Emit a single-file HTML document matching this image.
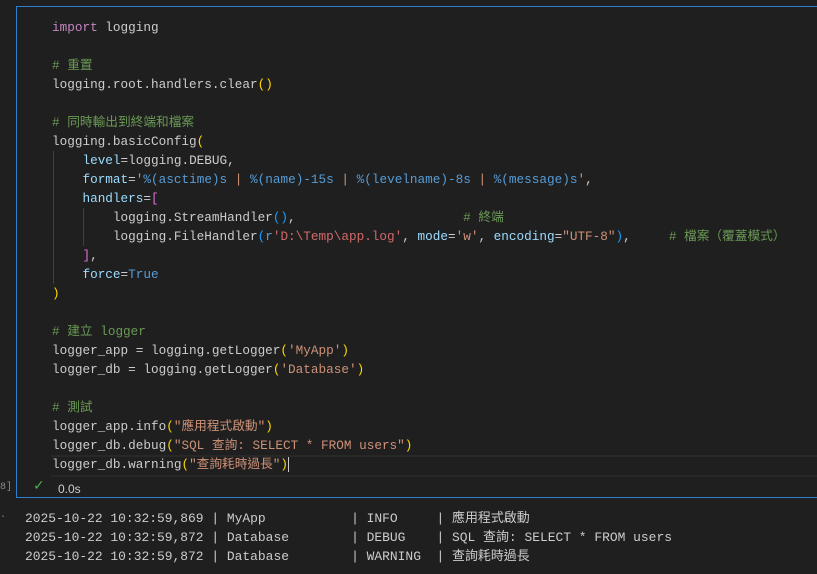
<!DOCTYPE html>
<html><head><meta charset="utf-8"><style>
body{margin:0;width:817px;height:574px;background:#1f1f1f;overflow:hidden;position:relative;font-family:"Liberation Mono","Noto Sans CJK TC",monospace;}
.cell{position:absolute;left:16px;top:6px;width:820px;height:492px;border:1px solid #2b80d0;box-sizing:border-box;background:#1f1f1f;}
.code{position:absolute;left:52px;top:18px;font-size:12.7px;line-height:19px;color:#cccccc;}
.l{height:19px;white-space:pre}
.k{color:#c586c0}.c{color:#6a9955}.s{color:#ce9178}.v{color:#9cdcfe}.b{color:#569cd6}.y{color:#ffd700}.p{color:#da70d6}.bl{color:#179fff}.r{color:#d16969}
.g{position:absolute;width:1px;background:#404040}
.cur{position:absolute;left:51px;top:455px;width:780px;height:18px;border-top:2px solid #282828;border-bottom:2px solid #282828}
.out{position:absolute;left:25px;top:509px;font-size:12.95px;line-height:19px;color:#cccccc;white-space:pre}
</style></head><body>
<div class="cell"></div>
<div class="cur"></div>
<div class="g" style="left:53px;top:151px;height:133px"></div>
<div class="g" style="left:83px;top:208px;height:38px"></div>
<div class="code"><div class="l"><span class="k">import</span> logging</div><div class="l"> </div><div class="l"><span class="c"># 重置</span></div><div class="l">logging.root.handlers.clear<span class="y">()</span></div><div class="l"> </div><div class="l"><span class="c"># 同時輸出到終端和檔案</span></div><div class="l">logging.basicConfig<span class="y">(</span></div><div class="l">    <span class="v">level</span>=logging.DEBUG,</div><div class="l">    <span class="v">format</span>=<span class="s">'</span><span class="b">%(asctime)s</span><span class="s"> | </span><span class="b">%(name)-15s</span><span class="s"> | </span><span class="b">%(levelname)-8s</span><span class="s"> | </span><span class="b">%(message)s</span><span class="s">'</span>,</div><div class="l">    <span class="v">handlers</span>=<span class="p">[</span></div><div class="l">        logging.StreamHandler<span class="bl">()</span>,                      <span class="c"># 終端</span></div><div class="l">        logging.FileHandler<span class="bl">(</span><span class="b">r</span><span class="r">'D:\Temp\app.log'</span>, <span class="v">mode</span>=<span class="s">'w'</span>, <span class="v">encoding</span>=<span class="s">"UTF-8"</span><span class="bl">)</span>,     <span class="c"># 檔案（覆蓋模式）</span></div><div class="l">    <span class="p">]</span>,</div><div class="l">    <span class="v">force</span>=<span class="b">True</span></div><div class="l"><span class="y">)</span></div><div class="l"> </div><div class="l"><span class="c"># 建立 logger</span></div><div class="l">logger_app = logging.getLogger<span class="y">(</span><span class="s">'MyApp'</span><span class="y">)</span></div><div class="l">logger_db = logging.getLogger<span class="y">(</span><span class="s">'Database'</span><span class="y">)</span></div><div class="l"> </div><div class="l"><span class="c"># 測試</span></div><div class="l">logger_app.info<span class="y">(</span><span class="s">"應用程式啟動"</span><span class="y">)</span></div><div class="l">logger_db.debug<span class="y">(</span><span class="s">"SQL 查詢: SELECT * FROM users"</span><span class="y">)</span></div><div class="l">logger_db.warning<span class="y">(</span><span class="s">"查詢耗時過長"</span><span class="y">)</span><span style="border-left:1px solid #ccc"></span></div></div>
<div style="position:absolute;left:0;top:482px;font-size:10px;color:#888;font-family:'Liberation Mono',monospace">8]</div>
<div style="position:absolute;left:33px;top:478px;font-size:14px;color:#4caf50;font-family:'DejaVu Sans',sans-serif">✓</div>
<div style="position:absolute;left:58px;top:482px;font-size:12px;color:#cccccc;font-family:'Liberation Sans',sans-serif">0.0s</div>
<div style="position:absolute;left:0;top:512px;font-size:10px;color:#888">·</div>
<div class="out">2025-10-22 10:32:59,869 | MyApp           | INFO     | 應用程式啟動
2025-10-22 10:32:59,872 | Database        | DEBUG    | SQL 查詢: SELECT * FROM users
2025-10-22 10:32:59,872 | Database        | WARNING  | 查詢耗時過長</div>
</body></html>
